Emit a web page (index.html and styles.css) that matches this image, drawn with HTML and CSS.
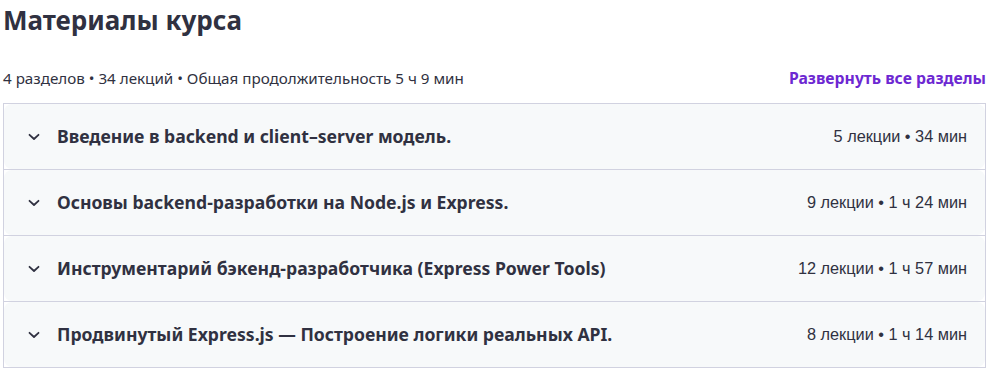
FILE: index.html
```html
<!DOCTYPE html>
<html lang="ru">
<head>
<meta charset="utf-8">
<title>Материалы курса</title>
<link rel="stylesheet" href="styles.css">
</head>
<body>
<div class="page">
  <h2 class="heading">Материалы курса</h2>
  <div class="summary">
    <span class="stats">4 разделов • 34 лекций • Общая продолжительность 5 ч 9 мин</span>
    <button class="expand-all">Развернуть все разделы</button>
  </div>
  <div class="curriculum">
    <div class="section">
      <div class="section-head">
        <svg class="chevron" viewBox="0 0 12 8" width="12" height="8"><path d="M1.5 1.8 L6 6 L10.5 1.8" fill="none" stroke="#303141" stroke-width="1.8" stroke-linecap="round" stroke-linejoin="round"/></svg>
        <span class="section-title">Введение в backend и client–server модель.</span>
        <span class="section-meta">5 лекции • 34 мин</span>
      </div>
    </div>
    <div class="section">
      <div class="section-head">
        <svg class="chevron" viewBox="0 0 12 8" width="12" height="8"><path d="M1.5 1.8 L6 6 L10.5 1.8" fill="none" stroke="#303141" stroke-width="1.8" stroke-linecap="round" stroke-linejoin="round"/></svg>
        <span class="section-title">Основы backend-разработки на Node.js и Express.</span>
        <span class="section-meta">9 лекции • 1 ч 24 мин</span>
      </div>
    </div>
    <div class="section">
      <div class="section-head">
        <svg class="chevron" viewBox="0 0 12 8" width="12" height="8"><path d="M1.5 1.8 L6 6 L10.5 1.8" fill="none" stroke="#303141" stroke-width="1.8" stroke-linecap="round" stroke-linejoin="round"/></svg>
        <span class="section-title">Инструментарий бэкенд-разработчика (Express Power Tools)</span>
        <span class="section-meta">12 лекции • 1 ч 57 мин</span>
      </div>
    </div>
    <div class="section">
      <div class="section-head">
        <svg class="chevron" viewBox="0 0 12 8" width="12" height="8"><path d="M1.5 1.8 L6 6 L10.5 1.8" fill="none" stroke="#303141" stroke-width="1.8" stroke-linecap="round" stroke-linejoin="round"/></svg>
        <span class="section-title">Продвинутый Express.js — Построение логики реальных API.</span>
        <span class="section-meta">8 лекции • 1 ч 14 мин</span>
      </div>
    </div>
  </div>
</div>
</body>
</html>
```

FILE: styles.css
```css
html, body {
  margin: 0;
  padding: 0;
  background: #ffffff;
}

body {
  font-family: "Noto Sans", "Liberation Sans", sans-serif;
  color: #303141;
}

.page {
  padding: 0 6px 0 3px;
}

.heading {
  margin: 0;
  padding-top: 1px;
  font-size: 26px;
  line-height: 38px;
  font-weight: 700;
  color: #303141;
}

.summary {
  display: flex;
  justify-content: space-between;
  align-items: center;
  margin-top: 22px;
  height: 34px;
}

.stats {
  font-size: 15.2px;
  color: #303141;
}

.expand-all {
  border: 0;
  background: none;
  padding: 0;
  font-family: inherit;
  font-size: 15.75px;
  font-weight: 700;
  color: #6d28d2;
  cursor: pointer;
}

.curriculum {
  margin-top: 8px;
  border: 1px solid #d1d2e0;
  background: #ffffff;
}

.section {
  border-bottom: 1px solid #d1d2e0;
}

.section:last-child {
  border-bottom: 0;
}

.section-head {
  display: flex;
  align-items: center;
  height: 65px;
  padding: 0 18px 0 24px;
  background: #f7f9fa;
  border-radius: 8px;
}

.chevron {
  flex: none;
  margin-right: 17px;
  margin-top: 1px;
}

.section-title {
  flex: 1;
  font-size: 17.6px;
  font-weight: 700;
  color: #303141;
  padding-bottom: 2px;
}

.section-meta {
  font-family: "Liberation Sans", Arial, sans-serif;
  font-size: 16.3px;
  color: #303141;
}
```
